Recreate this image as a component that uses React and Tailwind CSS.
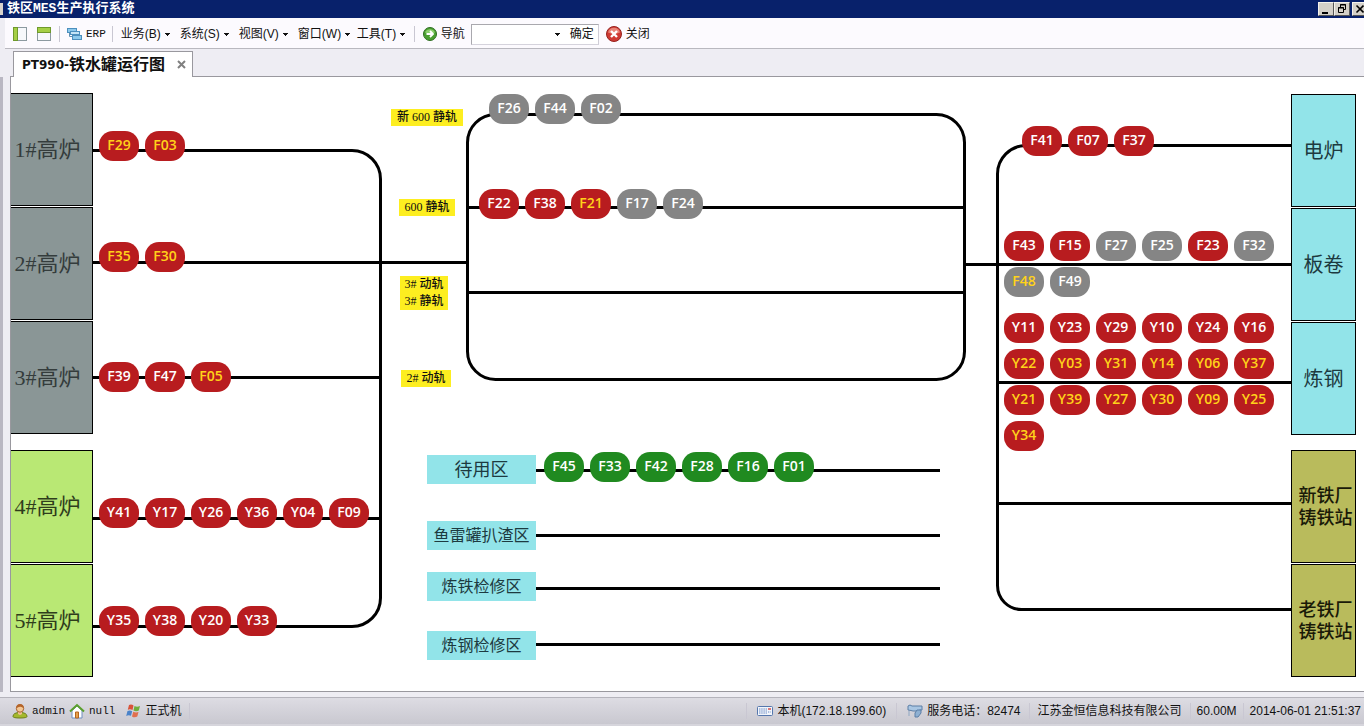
import React from 'react';

const menus = ['业务(B)', '系统(S)', '视图(V)', '窗口(W)', '工具(T)'];

const leftPlants = [
  [
    { name: '1#高炉', color: 'bg-[#8a9696] text-[#343c3c]' },
    { name: '2#高炉', color: 'bg-[#8a9696] text-[#343c3c]' },
    { name: '3#高炉', color: 'bg-[#8a9696] text-[#343c3c]' },
  ],
  [
    { name: '4#高炉', color: 'bg-[#b9e874] text-[#2f3d1c]' },
    { name: '5#高炉', color: 'bg-[#b9e874] text-[#2f3d1c]' },
  ],
];

const rightPlants = [
  [
    { lines: ['电炉'], color: 'bg-[#92e4e9] text-[#1d3a40] text-xl' },
    { lines: ['板卷'], color: 'bg-[#92e4e9] text-[#1d3a40] text-xl' },
    { lines: ['炼钢'], color: 'bg-[#92e4e9] text-[#1d3a40] text-xl' },
  ],
  [
    { lines: ['新铁厂', '铸铁站'], color: 'bg-[#b9bb5c] text-[#1a1a08] text-lg leading-[22px] font-medium pl-1' },
    { lines: ['老铁厂', '铸铁站'], color: 'bg-[#b9bb5c] text-[#1a1a08] text-lg leading-[22px] font-medium pl-1' },
  ],
];

// r = red, g = gray, n = green; a trailing "y" gives yellow text
const tankGroups = [
  { place: 'left-[6px] top-[54px]', tanks: ['F29:ry', 'F03:ry'] },
  { place: 'left-[6px] top-[165px]', tanks: ['F35:ry', 'F30:ry'] },
  { place: 'left-[6px] top-[285px]', tanks: ['F39:r', 'F47:r', 'F05:ry'] },
  { place: 'left-[6px] top-[421px]', tanks: ['Y41:r', 'Y17:r', 'Y26:r', 'Y36:r', 'Y04:r', 'F09:r'] },
  { place: 'left-[6px] top-[529px]', tanks: ['Y35:r', 'Y38:r', 'Y20:r', 'Y33:r'] },
  { place: 'left-[396px] top-[17px]', tanks: ['F26:g', 'F44:g', 'F02:g'] },
  { place: 'left-[386px] top-[112px]', tanks: ['F22:r', 'F38:r', 'F21:ry', 'F17:g', 'F24:g'] },
  { place: 'left-[451px] top-[375px]', tanks: ['F45:n', 'F33:n', 'F42:n', 'F28:n', 'F16:n', 'F01:n'] },
  { place: 'left-[929px] top-[49px]', tanks: ['F41:r', 'F07:r', 'F37:r'] },
  { place: 'left-[911px] top-[154px]', tanks: ['F43:r', 'F15:r', 'F27:g', 'F25:g', 'F23:r', 'F32:g', 'F48:gy', 'F49:g'] },
  {
    place: 'left-[911px] top-[236px]',
    tanks: [
      'Y11:r', 'Y23:r', 'Y29:r', 'Y10:r', 'Y24:r', 'Y16:r',
      'Y22:ry', 'Y03:ry', 'Y31:ry', 'Y14:ry', 'Y06:ry', 'Y37:ry',
      'Y21:ry', 'Y39:ry', 'Y27:ry', 'Y30:ry', 'Y09:ry', 'Y25:ry',
      'Y34:ry',
    ],
  },
];

const trackLabels = [
  { place: 'left-[298px] top-[32px] w-[72px]', lines: ['新 600 静轨'] },
  { place: 'left-[306px] top-[122px] w-[56px]', lines: ['600 静轨'] },
  { place: 'left-[307px] top-[199px] w-[48px]', lines: ['3# 动轨', '3# 静轨'] },
  { place: 'left-[308px] top-[293px] w-[50px]', lines: ['2# 动轨'] },
];

const zones = [
  { name: '待用区', place: 'top-[378px] text-lg' },
  { name: '鱼雷罐扒渣区', place: 'top-[444px] text-base' },
  { name: '炼铁检修区', place: 'top-[495px] text-base' },
  { name: '炼钢检修区', place: 'top-[554px] text-base' },
];

const tankColors = {
  r: 'bg-[#b81c1f]',
  g: 'bg-[#858585]',
  n: 'bg-[#208a20]',
};

const Tank = ({ code }) => {
  const [name, kind] = code.split(':');
  return (
    <div
      className={`flex h-[30px] w-10 items-center justify-center rounded-[14px] pb-0.5 font-['Open_Sans'] text-sm font-semibold ${tankColors[kind[0]]} ${kind[1] ? 'text-[#ffd21a]' : 'text-white'}`}
    >
      {name}
    </div>
  );
};

const Separator = () => <div className="h-4 w-px bg-[#c9c7d2]" />;

const Caret = () => (
  <svg className="h-[3px] w-[5px]" viewBox="0 0 5 3" shapeRendering="crispEdges">
    <path d="M0 0h5v1H4v1H3v1H2V2H1V1H0z" fill="#111" />
  </svg>
);

const TitleBar = () => (
  <header className="flex h-[18px] shrink-0 items-center overflow-hidden bg-[#08216b] text-white">
    <div className="h-3 w-[3px] bg-[#d8d4cc]" />
    <h1 className="ml-1 flex-1 font-['Liberation_Mono','Noto_Sans_CJK_SC',monospace] text-[13px] leading-[18px] font-bold">铁区MES生产执行系统</h1>
    <div className="-mr-1 flex">
      <button aria-label="最小化" className="flex h-3.5 w-4 items-center justify-center border border-[#f4f2ec] border-r-[#555] border-b-[#555] bg-[#d4d0c8]">
        <svg className="h-2.5 w-3" viewBox="0 0 12 10"><path d="M2 8h6v2H2z" fill="#000" /></svg>
      </button>
      <button aria-label="还原" className="flex h-3.5 w-4 items-center justify-center border border-[#f4f2ec] border-r-[#555] border-b-[#555] bg-[#d4d0c8]">
        <svg className="h-2.5 w-3" viewBox="0 0 12 10" fill="none" stroke="#000">
          <path d="M4.500 3V.5h5v5H8M4 1h6M2.500 3.500h5v5h-5zM2 4h6" />
        </svg>
      </button>
      <button aria-label="退出" className="ml-0.5 flex h-3.5 w-4 items-center justify-center border border-[#f4f2ec] border-r-[#555] border-b-[#555] bg-[#d4d0c8]">
        <svg className="h-2.5 w-3" viewBox="0 0 12 10"><path d="M2.500 1.500l7 7M9.500 1.500l-7 7" stroke="#000" strokeWidth="1.600" /></svg>
      </button>
    </div>
  </header>
);

const Toolbar = () => (
  <nav className="ml-[5px] flex h-[31px] shrink-0 items-center border-b border-[#b9b8bf] bg-[#fcfafe] pt-0.5 pl-2">
    <button aria-label="左侧面板">
      <svg className="h-3.5 w-3.5" viewBox="0 0 14 14">
        <rect x=".5" y=".5" width="13" height="13" fill="#f6f8fb" stroke="#8c9aa0" />
        <rect x=".5" y=".5" width="4" height="13" fill="#a5cf45" stroke="#6f9a2c" />
      </svg>
    </button>
    <button aria-label="顶部面板" className="ml-2.5">
      <svg className="h-3.5 w-3.5" viewBox="0 0 14 14">
        <rect x=".5" y=".5" width="13" height="13" fill="#f6f8fb" stroke="#8c9aa0" />
        <rect x=".5" y=".5" width="13" height="5" fill="#a5cf45" stroke="#6f9a2c" />
      </svg>
    </button>
    <div className="ml-2"><Separator /></div>
    <button className="ml-[7px] flex items-center gap-1 font-['Liberation_Mono'] text-[11px]">
      <svg className="h-3 w-[15px]" viewBox="0 0 15 12">
        <rect x=".5" y=".5" width="9" height="4" fill="#8cc9ec" stroke="#4c8fbd" />
        <path d="M2.500 5v3.500H6" fill="none" stroke="#5f8fb0" />
        <rect x="3.500" y="3.500" width="9" height="3" fill="#c4e4f6" stroke="#4c8fbd" />
        <rect x="5.500" y="7.500" width="9" height="4" fill="#8cc9ec" stroke="#4c8fbd" />
      </svg>
      ERP
    </button>
    <div className="ml-1.5"><Separator /></div>
    <div className="ml-2 flex">
      {menus.map((menu) => (
        <button key={menu} className="flex w-[59px] items-center gap-1 whitespace-nowrap">
          {menu}
          <Caret />
        </button>
      ))}
    </div>
    <div className="-ml-0.5"><Separator /></div>
    <button className="ml-2 flex items-center gap-1">
      <svg className="h-3.5 w-3.5" viewBox="0 0 14 14">
        <circle cx="7" cy="7" r="6.500" fill="#4a9f30" stroke="#2f6e22" />
        <path d="M2 5.500a5.500 5.500 0 0 1 10 0q-5 2-10 0z" fill="#8ccf6d" />
        <path d="M3.500 7h6M7 4l3 3-3 3" fill="none" stroke="#fff" strokeWidth="1.800" />
      </svg>
      导航
    </button>
    <div className="ml-1.5 flex h-[21px] items-center border border-[#a9a8ae] border-r-[#cfcdd6] border-b-[#d5d3dc] bg-white">
      <div className="relative">
        <select aria-label="导航目标" className="block h-[19px] w-24 appearance-none bg-white pl-1" />
        <div className="pointer-events-none absolute top-2 right-2"><Caret /></div>
      </div>
      <button className="pr-1 pl-0.5">确定</button>
    </div>
    <button className="ml-[7px] flex items-center gap-1">
      <svg className="h-4 w-4" viewBox="0 0 16 16">
        <circle cx="8" cy="8" r="7.500" fill="#cf3a33" stroke="#96231f" />
        <path d="M2 6.500a6.200 6.200 0 0 1 12 0q-6 2.500-12 0z" fill="#e98478" />
        <path d="M5 5l6 6M11 5l-6 6" stroke="#fff" strokeWidth="2.400" />
      </svg>
      关闭
    </button>
  </nav>
);

const TabStrip = () => (
  <div className="ml-2.5 flex h-7 shrink-0 items-end border-b border-[#99989e] pl-[3px]">
    <div className="-mb-px flex h-[26px] w-[180px] items-center justify-between border border-b-0 border-[#99989e] bg-white pr-1.5 pl-2">
      <h2 className="flex items-center text-base leading-6 font-bold whitespace-nowrap">
        <span className="font-['DejaVu_Sans'] text-xs">PT990-</span>铁水罐运行图
      </h2>
      <button aria-label="关闭标签">
        <svg className="h-[9px] w-[9px]" viewBox="0 0 9 9"><path d="M1 1l7 7M8 1L1 8" stroke="#808080" strokeWidth="2" /></svg>
      </button>
    </div>
  </div>
);

const Tracks = () => (
  <svg className="block h-[614px] w-full" fill="none" stroke="#000" strokeWidth="3">
    <path d="M0 73.500H259A28.500 28.500 0 0 1 287.500 102V521A28.500 28.500 0 0 1 259 549.500H0" />
    <path d="M0 185.500H374.500M0 300.500H287.500M0 441.500H287.500" />
    <rect x="374.500" y="37.500" width="497" height="265" rx="28" />
    <path d="M374.500 130.500h497M374.500 215.500h497" />
    <path d="M443 393.500h404M443 458.500h404M443 511.500h404M443 567.500h404" />
    <path d="M934 68.500H933A28.500 28.500 0 0 0 904.500 97V508.500A24 24 0 0 0 928.500 532.500H930" />
    <line x1="933" y1="68.500" x2="100%" y2="68.500" />
    <line x1="871" y1="187.500" x2="100%" y2="187.500" />
    <line x1="904" y1="305.500" x2="100%" y2="305.500" />
    <line x1="904" y1="426.500" x2="100%" y2="426.500" />
    <line x1="928" y1="532.500" x2="100%" y2="532.500" />
  </svg>
);

const Diagram = () => (
  <div className="relative min-w-[1198px] flex-1">
    <Tracks />
    {trackLabels.map((label) => (
      <div
        key={label.lines[0]}
        className={`absolute bg-[#fdee20] text-center font-['Liberation_Serif','Noto_Sans_CJK_SC',serif] text-xs leading-[17px] font-medium whitespace-nowrap ${label.place}`}
      >
        {label.lines.map((line) => <p key={line}>{line}</p>)}
      </div>
    ))}
    {zones.map((zone) => (
      <div
        key={zone.name}
        className={`absolute left-[334px] flex h-[29px] w-[109px] items-center justify-center bg-[#92e4e9] whitespace-nowrap text-[#1d3a40] ${zone.place}`}
      >
        {zone.name}
      </div>
    ))}
    {tankGroups.map((group) => (
      <div key={group.tanks[0]} className={`absolute grid grid-cols-[repeat(6,40px)] gap-1.5 ${group.place}`}>
        {group.tanks.map((tank) => <Tank key={tank} code={tank} />)}
      </div>
    ))}
  </div>
);

const StatusBar = () => (
  <footer className="flex h-[29px] shrink-0 items-center border-t border-b-2 border-t-[#b4b3bb] border-b-[#d6d5dc] bg-gradient-to-b from-[#dddce3] to-[#c9c8d0] pr-[3px] pl-3 whitespace-nowrap">
    <div className="flex items-center gap-1 font-['Liberation_Mono'] text-[11px]">
      <svg className="h-4 w-4" viewBox="0 0 16 16">
        <path d="M1 13.500Q1 9.500 8 9.500t7 4Q15 15 8 15t-7-1.500z" fill="#a4b82c" stroke="#6f7f1c" />
        <path d="M6 8h4v3L8 12l-2-1z" fill="#f0c090" />
        <circle cx="8" cy="5.500" r="3.700" fill="#f3c795" stroke="#a8642e" />
        <path d="M4.200 5.500Q4 1 8 1t3.800 4.500Q10 3.500 8 3.800T4.200 5.500z" fill="#b5652b" />
      </svg>
      admin
    </div>
    <div className="ml-1 flex items-center gap-1 font-['Liberation_Mono'] text-[11px]">
      <svg className="h-4 w-4" viewBox="0 0 16 16">
        <path d="M3 7.500L8 3l5 4.500V15H3z" fill="#fff" stroke="#6e8fc0" />
        <path d="M1 8.500L8 2l7 6.500" fill="none" stroke="#5aa02c" strokeWidth="2" />
        <path d="M6.500 9h3v6h-3z" fill="#e8a04c" stroke="#b4651d" />
      </svg>
      null
    </div>
    <div className="ml-[11px] flex items-center gap-1">
      <svg className="h-3.5 w-[15px]" viewBox="0 0 15 14">
        <path d="M3 1q2.500-1 4.500.5L6.500 6Q4 4.800 1.800 5.800z" fill="#d9533a" />
        <path d="M8.500 2Q11 3.500 14 2l-1.200 4.600Q10 8 7.500 6.500z" fill="#6fae3c" />
        <path d="M1.500 7Q4 6 6.200 7.200L5 11.800Q2.500 10.800.2 12z" fill="#4b83c9" />
        <path d="M7.200 7.800Q10 9 12.500 8l-1.200 4.600Q8.500 14 6 12.400z" fill="#e0704e" />
      </svg>
      正式机
    </div>
    <div className="ml-2 flex-1"><Separator /></div>
    <Separator />
    <div className="mx-2.5 flex items-center gap-1">
      <svg className="h-2.5 w-4" viewBox="0 0 16 10">
        <rect x=".5" y=".5" width="15" height="9" rx="1" fill="#f2f5fb" stroke="#5577ad" />
        <path d="M2 3h8M2 5h8M2 7h8" stroke="#6b8cc4" strokeDasharray="1.500 .7" />
        <path d="M11 3h3" stroke="#d04b4b" strokeWidth="1.500" />
        <path d="M11 6h3" stroke="#6b8cc4" strokeDasharray="1 .7" />
      </svg>
      本机(172.18.199.60)
    </div>
    <Separator />
    <div className="mx-2 ml-2.5 flex items-center gap-1">
      <svg className="h-3.5 w-4" viewBox="0 0 16 14">
        <path d="M1 2q2-2 4 0h10v4h-2l-2 1H6L4 6.500 1 6z" fill="#a9c6e3" stroke="#5d7fa6" />
        <path d="M10 6h4v3l-3 4H8V9z" fill="#8fb0d2" stroke="#5d7fa6" />
        <path d="M2 7v5" stroke="#8ea6c2" />
      </svg>
      服务电话：82474
    </div>
    <Separator />
    <div className="mx-2">江苏金恒信息科技有限公司</div>
    <Separator />
    <div className="mx-1.5">60.00M</div>
    <Separator />
    <time className="ml-1.5">2014-06-01 21:51:37</time>
  </footer>
);

export default function App() {
  return (
    <div className="flex min-h-screen flex-col overflow-hidden bg-[#eeedf3] font-['Liberation_Sans','Noto_Sans_CJK_SC',sans-serif] text-xs text-[#111]">
      <TitleBar />
      <Toolbar />
      <TabStrip />
      <div className="mb-[5px] flex flex-1 border-l-[3px] border-[#b9b7c2] pl-[7px]">
        <main className="flex flex-1 border-b border-l border-[#99989e] bg-white pr-2">
          <div className="flex w-[82px] shrink-0 flex-col gap-4 pt-4">
            {leftPlants.map((group) => (
              <div key={group[0].name} className="flex flex-col gap-px">
                {group.map((plant) => (
                  <div
                    key={plant.name}
                    className={`flex h-[113px] items-center justify-center border border-l-0 border-black pr-2 font-['Liberation_Serif','Noto_Sans_CJK_SC',serif] text-[22px] ${plant.color}`}
                  >
                    {plant.name}
                  </div>
                ))}
              </div>
            ))}
          </div>
          <Diagram />
          <div className="flex w-[65px] shrink-0 flex-col gap-[15px] pt-[17px]">
            {rightPlants.map((group) => (
              <div key={group[0].lines[0]} className="flex flex-col gap-px">
                {group.map((plant) => (
                  <div
                    key={plant.lines[0]}
                    className={`flex h-[113px] flex-col items-center justify-center border border-black ${plant.color}`}
                  >
                    {plant.lines.map((line) => <p key={line}>{line}</p>)}
                  </div>
                ))}
              </div>
            ))}
          </div>
        </main>
      </div>
      <StatusBar />
    </div>
  );
}
